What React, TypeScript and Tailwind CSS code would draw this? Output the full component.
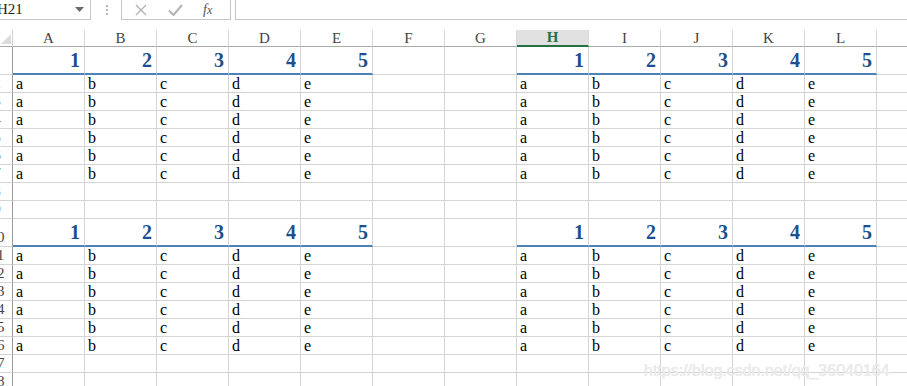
import React from 'react'

const COLS = ['A', 'B', 'C', 'D', 'E', 'F', 'G', 'H', 'I', 'J', 'K', 'L', 'M']
const LETTERS = ['a', 'b', 'c', 'd', 'e']

const sheetFont = { fontFamily: '"Liberation Serif", "DejaVu Serif", serif' }

// which rows are headings, which carry a..e data
const ROWS: { n: number; kind: 'head' | 'data' | 'empty' }[] = [
  { n: 1, kind: 'head' },
  ...[2, 3, 4, 5, 6, 7].map((n) => ({ n, kind: 'data' as const })),
  { n: 8, kind: 'empty' },
  { n: 9, kind: 'empty' },
  { n: 10, kind: 'head' },
  ...[11, 12, 13, 14, 15, 16].map((n) => ({ n, kind: 'data' as const })),
  { n: 17, kind: 'empty' },
  { n: 18, kind: 'empty' },
  { n: 19, kind: 'empty' },
]

function RowHeader({ n, tall }: { n: number; tall?: boolean }) {
  return (
    <div
      className={`w-[13px] shrink-0 overflow-hidden border-r border-b border-r-[#9b9b9b] border-b-[#d4d4d4] flex items-end ${
        tall ? 'h-[28px]' : 'h-[18px]'
      }`}
    >
      <div className="w-[28px] ml-[-17px] shrink-0 text-center text-[15px] leading-[17px] text-[#444]" style={sheetFont}>
        {n}
      </div>
    </div>
  )
}

function Cell({ col, kind }: { col: number; kind: 'head' | 'data' | 'empty' }) {
  // block 1 = columns A-E, block 2 = columns H-L
  const inBlock = (col >= 0 && col <= 4) || (col >= 7 && col <= 11)
  const idx = col <= 4 ? col : col - 7
  if (kind === 'head') {
    return (
      <div
        className={`w-[72px] h-[28px] shrink-0 border-r border-[#d4d4d4] flex items-end justify-end pr-[4px] pb-[3px] ${
          inBlock ? 'border-b-2 border-b-[#4f81bd]' : 'border-b'
        }`}
      >
        {inBlock && (
          <span className="text-[20px] leading-[20px] font-bold text-[#1f4e8c]" style={sheetFont}>
            {idx + 1}
          </span>
        )}
      </div>
    )
  }
  return (
    <div className="w-[72px] h-[18px] shrink-0 border-r border-b border-[#d4d4d4] flex items-end pl-[3px]">
      {kind === 'data' && inBlock && (
        <span className="text-[16px] leading-[16px] text-black" style={sheetFont}>
          {LETTERS[idx]}
        </span>
      )}
    </div>
  )
}

function FormulaBar() {
  return (
    <div className="flex h-[20px] items-stretch">
      <div className="w-[91px] shrink-0 border-r border-b border-[#c6c6c6] flex items-center justify-between pr-[6px]">
        <span className="ml-[-3px] text-[15px] leading-[15px] text-[#222]" style={sheetFont}>
          H21
        </span>
        <svg width="9" height="5" viewBox="0 0 9 5">
          <path d="M0 0 L9 0 L4.5 5 Z" fill="#6b6b6b" />
        </svg>
      </div>
      <div className="w-[30px] shrink-0 flex flex-col items-center justify-center gap-[2px] pl-[1px]">
        <span className="w-[2px] h-[2px] bg-[#b5b5b5]" />
        <span className="w-[2px] h-[2px] bg-[#b5b5b5]" />
        <span className="w-[2px] h-[2px] bg-[#b5b5b5]" />
      </div>
      <div className="w-[110px] shrink-0 border-l border-r border-b border-[#c6c6c6] flex items-center">
        <svg width="12" height="12" viewBox="0 0 12 12" className="ml-[13px]">
          <path d="M1 1 L11 11 M11 1 L1 11" stroke="#b3b3b3" strokeWidth="1.4" />
        </svg>
        <svg width="15" height="12" viewBox="0 0 15 12" className="ml-[21px]">
          <path d="M1 6.5 L5.5 11 L14 1" stroke="#b3b3b3" strokeWidth="2" fill="none" />
        </svg>
        <span className="ml-[20px] text-[14px] italic text-[#555]" style={sheetFont}>
          f<span className="text-[12px]">x</span>
        </span>
      </div>
      <div className="ml-[4px] flex-1 border-l border-b border-[#c6c6c6]" />
    </div>
  )
}

export default function App() {
  return (
    <div className="relative w-[907px] h-[386px] overflow-hidden bg-white">
      <FormulaBar />
      <div className="h-[10px]" />
      {/* column headers */}
      <div className="flex h-[17px]">
        <div className="w-[13px] h-[17px] shrink-0 border-r border-b border-r-[#d4d4d4] border-b-[#ababab] flex items-end pl-[1px] pb-[2px]">
          <svg width="10" height="10" viewBox="0 0 10 10">
            <path d="M10 0 L10 10 L0 10 Z" fill="#dcdcdc" />
          </svg>
        </div>
        {COLS.map((c) => (
          <div
            key={c}
            className={`w-[72px] h-[17px] shrink-0 border-r border-r-[#d9d9d9] flex items-center justify-center text-[15px] leading-[15px] ${
              c === 'H'
                ? 'bg-[#e1e1e1] border-b-2 border-b-[#217346] text-[#217346] font-bold'
                : 'border-b border-b-[#ababab] text-[#444]'
            }`}
            style={sheetFont}
          >
            {/* M sits past the visible edge */}
            {c === 'M' ? '' : c}
          </div>
        ))}
      </div>
      {ROWS.map((r) => (
        <div key={r.n} className="flex">
          <RowHeader n={r.n} tall={r.kind === 'head'} />
          {COLS.map((c, i) => (
            <Cell key={c} col={i} kind={r.kind} />
          ))}
        </div>
      ))}
      {/* blog watermark over the sheet */}
      <div
        className="absolute left-[644px] top-[359px] text-[16px] text-[#ececec]"
        style={{ fontFamily: '"Liberation Sans", Arial, sans-serif', textShadow: '0 0 1px #dddddd' }}
      >
        https://blog.csdn.net/qq_36040164
      </div>
    </div>
  )
}
